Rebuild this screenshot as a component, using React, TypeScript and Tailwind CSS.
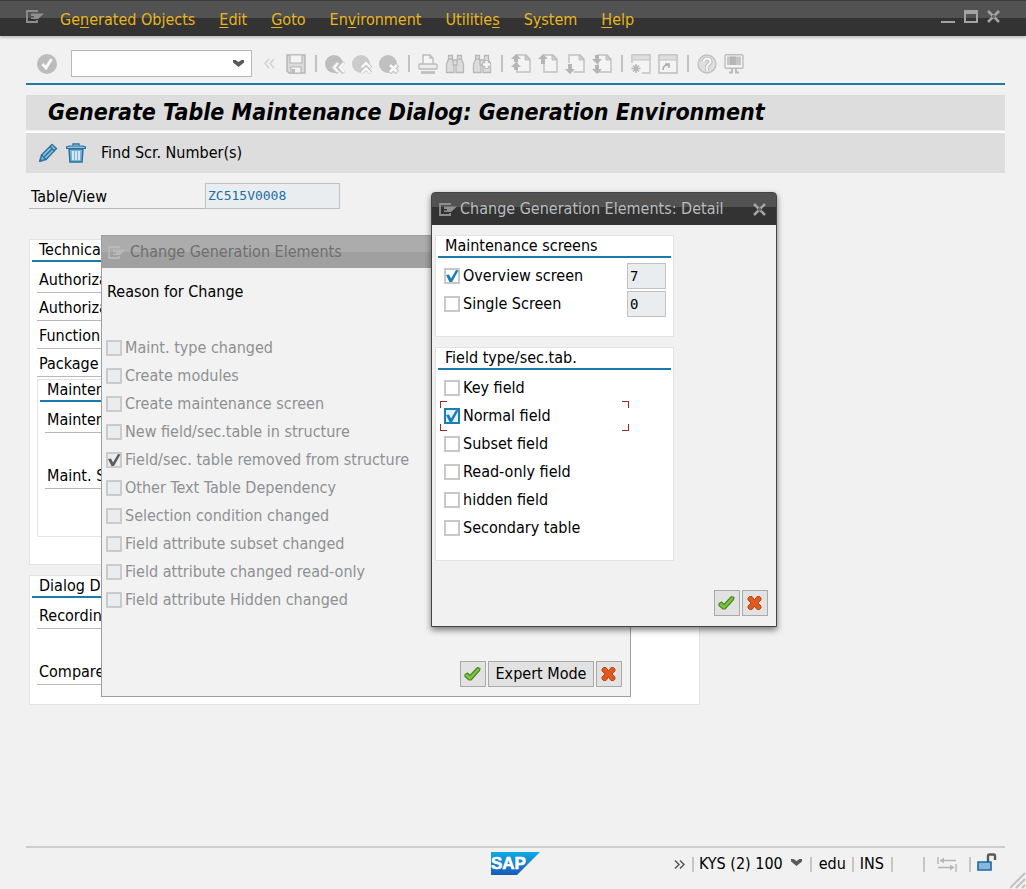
import { useState, type ReactNode } from "react";

const menus = [
  { before: "Ge", key: "n", after: "erated Objects" },
  { before: "", key: "E", after: "dit" },
  { before: "", key: "G", after: "oto" },
  { before: "En", key: "v", after: "ironment" },
  { before: "Utilitie", key: "s", after: "" },
  { before: "S", key: "y", after: "stem" },
  { before: "", key: "H", after: "elp" },
];

const reasons = [
  "Maint. type changed",
  "Create modules",
  "Create maintenance screen",
  "New field/sec.table in structure",
  "Field/sec. table removed from structure",
  "Other Text Table Dependency",
  "Selection condition changed",
  "Field attribute subset changed",
  "Field attribute changed read-only",
  "Field attribute Hidden changed",
];

const fieldTypes = [
  "Key field",
  "Normal field",
  "Subset field",
  "Read-only field",
  "hidden field",
  "Secondary table",
];

const page = "M6 1h9l4 4v13H6z";
const pageFold = "M14 1v5h5z";

const toolbarGroups: { label: string; art: ReactNode }[][] = [
  [
    {
      label: "Back",
      art: (
        <>
          <circle cx="9" cy="10" r="9" fill="#bdbdbd" />
          <path d="M13 8l-5 5.5 5 5.5M19 8l-5 5.5 5 5.5" fill="none" stroke="#c6c6c6" strokeWidth="4" />
          <path d="M13 9l-4 4.5 4 4.5M19 9l-4 4.5 4 4.5" fill="none" stroke="#f8f8f8" strokeWidth="2.4" />
        </>
      ),
    },
    {
      label: "Exit",
      art: (
        <>
          <circle cx="9" cy="10" r="9" fill="#cbcbcb" />
          <path d="M9 14l5-5 5 5M9 19l5-5 5 5" fill="none" stroke="#c4c4c4" strokeWidth="4" />
          <path d="M9.5 13.5L14 9l4.5 4.5M9.5 19l4.5-4.5 4.5 4.5" fill="none" stroke="#f8f8f8" strokeWidth="2.4" />
        </>
      ),
    },
    {
      label: "Cancel",
      art: (
        <>
          <circle cx="9" cy="10" r="9" fill="#c0c0c0" />
          <path d="M10.5 10.5l8 8M18.5 10.5l-8 8" stroke="#bdbdbd" strokeWidth="5" />
          <path d="M11 11l7 7M18 11l-7 7" stroke="#f8f8f8" strokeWidth="2.8" />
        </>
      ),
    },
  ],
  [
    {
      label: "Print",
      art: (
        <g fill="none" stroke="#bcbcbc" strokeWidth="1.4">
          <path d="M5 10V1h7l3 3v6M12 1v3h3" fill="#f6f6f6" />
          <rect x="1" y="10" width="18" height="5" rx="1" fill="#ededed" />
          <path d="M3 18.5h14" strokeWidth="2.6" />
        </g>
      ),
    },
    {
      label: "Find",
      art: (
        <g fill="#dcdcdc" stroke="#b8b8b8" strokeWidth="1.3">
          <path d="M3.5 1.5h4v4l1.5 3v10H1.5V10l2-4.5z" />
          <path d="M12.5 1.5h4v4l2 4.5v8.5H11v-10l1.5-3z" />
          <path d="M8 6h4v5H8zM4 5h3M13 5h3" />
        </g>
      ),
    },
    {
      label: "Find next",
      art: (
        <>
          <g fill="#dcdcdc" stroke="#b8b8b8" strokeWidth="1.3">
            <path d="M3.5 1.5h4v4l1.5 3v10H1.5V10l2-4.5z" />
            <path d="M12.5 1.5h4v4l2 4.5v8.5H11v-10l1.5-3z" />
            <path d="M8 6h4v5H8zM4 5h3" />
          </g>
          <path d="M14.5 6v9M10 10.5h9" stroke="#bbb" strokeWidth="4.5" />
          <path d="M14.5 7v7M11 10.5h7" stroke="#f8f8f8" strokeWidth="2.4" />
        </>
      ),
    },
  ],
  [
    {
      label: "First page",
      art: (
        <>
          <path d={page} fill="#f4f4f4" stroke="#c0c0c0" strokeWidth="1.4" />
          <path d={pageFold} fill="#ccc" stroke="#c0c0c0" />
          <path d="M5 0l5 5H7v3H3V5H0zM5 8l5 5H7v3H3v-3H0z" fill="#b5b5b5" />
        </>
      ),
    },
    {
      label: "Previous page",
      art: (
        <>
          <path d={page} fill="#f4f4f4" stroke="#c0c0c0" strokeWidth="1.4" />
          <path d={pageFold} fill="#ccc" stroke="#c0c0c0" />
          <path d="M5 0l5 5H7v5H3V5H0z" fill="#b5b5b5" />
        </>
      ),
    },
    {
      label: "Next page",
      art: (
        <>
          <path d="M4 9V1h11l4 4v13H9" fill="#f4f4f4" stroke="#c0c0c0" strokeWidth="1.4" />
          <path d={pageFold} fill="#ccc" stroke="#c0c0c0" />
          <path d="M5 20l5-5H7v-5H3v5H0z" fill="#b5b5b5" />
        </>
      ),
    },
    {
      label: "Last page",
      art: (
        <>
          <path d={page} fill="#f4f4f4" stroke="#c0c0c0" strokeWidth="1.4" />
          <path d={pageFold} fill="#ccc" stroke="#c0c0c0" />
          <path d="M5 10l5-5H7V1H3v4H0zM5 20l5-5H7v-4H3v4H0z" fill="#b5b5b5" />
        </>
      ),
    },
  ],
  [
    {
      label: "Create session",
      art: (
        <>
          <path d="M1 9V1h18v18h-8" fill="#f4f4f4" stroke="#c4c4c4" strokeWidth="1.4" />
          <path d="M1 1h18v5H1z" fill="#dedede" stroke="#c4c4c4" />
          <path d="M5 10v9M0.5 14.5h9M2 11.5l6 6M8 11.5l-6 6" stroke="#b8b8b8" strokeWidth="1.6" />
        </>
      ),
    },
    {
      label: "Create shortcut",
      art: (
        <>
          <path d="M1 1h18v18H1z" fill="#f4f4f4" stroke="#bcbcbc" strokeWidth="1.4" />
          <path d="M1 1h18v5H1z" fill="#dedede" stroke="#c4c4c4" />
          <path d="M5 16c0-3 1-5 5-5M7 10h4v4" fill="none" stroke="#adadad" strokeWidth="1.6" />
        </>
      ),
    },
  ],
  [
    {
      label: "Help",
      art: (
        <>
          <circle cx="10" cy="10" r="9" fill="#dedede" stroke="#c0c0c0" strokeWidth="1.4" />
          <path d="M6.5 8c0-4.5 7-4.5 7 0 0 2-3.5 2.5-3.5 5M10 14v2.5" fill="none" stroke="#b9b9b9" strokeWidth="4" />
          <path d="M6.5 8c0-4.5 7-4.5 7 0 0 2-3.5 2.5-3.5 5M10 14v2.5" fill="none" stroke="#f6f6f6" strokeWidth="2.2" />
        </>
      ),
    },
    {
      label: "Customize local layout",
      art: (
        <>
          <rect x="1" y="0.7" width="18" height="13.6" rx="1" fill="#f4f4f4" stroke="#bdbdbd" strokeWidth="1.4" />
          <path d="M3 2.5h14V11H3z" fill="#c6c6c6" />
          <path d="M6 2.5h6V11H6z" fill="#b6b6b6" />
          <path d="M8 14v4M12 14v4M5 18.5h4M11 18.5h4" stroke="#b9b9b9" strokeWidth="1.8" />
        </>
      ),
    },
  ],
];

function Glyph({ children }: { children: ReactNode }) {
  return (
    <svg viewBox="0 0 20 20" className="block size-5" aria-hidden="true">
      {children}
    </svg>
  );
}

function SessionIcon({ className }: { className: string }) {
  return (
    <svg viewBox="0 0 18 13" className={`block h-[13px] w-[18px] shrink-0 ${className}`} aria-hidden="true">
      <path d="M11 2V1H1v11h10v-2" fill="none" stroke="currentColor" strokeWidth="1.8" />
      <path d="M5 3.5h13L12 9H5V7.5h3V6H5z" fill="currentColor" />
    </svg>
  );
}

function CloseIcon() {
  return (
    <svg viewBox="0 0 13 13" className="block size-[13px]" aria-hidden="true">
      <path d="M1 1l11 11M12 1L1 12" stroke="#a3a3a3" strokeWidth="2.6" />
      <rect x="5" y="5" width="3" height="3" fill="#6a6a6a" />
    </svg>
  );
}

function Separator() {
  return (
    <span className="flex w-[5px] justify-center">
      <span className="h-[17px] w-0.5 bg-[#c2c2c2]" />
    </span>
  );
}

function StatusDivider() {
  return <span className="h-[15px] w-0.5 bg-[#c6c6c6]" />;
}

function Chevron({ className }: { className?: string }) {
  return (
    <svg viewBox="0 0 11 7" className={`h-[7px] w-[11px] ${className ?? ""}`} aria-hidden="true">
      <path d="M0 0h2.5l3 2 3-2H11v2.5L5.5 7 0 2.5z" fill="#5a5a5a" />
    </svg>
  );
}

function Check({
  label,
  defaultChecked = false,
  disabled = false,
  focused = false,
}: {
  label: string;
  defaultChecked?: boolean;
  disabled?: boolean;
  focused?: boolean;
}) {
  const [checked, setChecked] = useState(defaultChecked);
  const box = disabled
    ? "border-[#c9cbcc] bg-[#e9edef]"
    : focused
      ? "border-[#1b7fb5] bg-[#e5f1f8]"
      : "border-[#c8c8c8] bg-white";

  return (
    <label className={`flex h-7 items-center gap-[3px] ${disabled ? "text-[#8e9093]" : "text-black"}`}>
      <span className="relative flex size-4 shrink-0">
        <input
          type="checkbox"
          checked={checked}
          disabled={disabled}
          onChange={(e) => setChecked(e.target.checked)}
          className={`size-4 appearance-none border-2 ${box}`}
        />
        {checked && (
          <svg viewBox="0 0 16 16" className="pointer-events-none absolute inset-0 size-4" aria-hidden="true">
            <path
              d="M2 7l3-.5 2 4L12 2l2.5.5L8 14H5.5z"
              fill={disabled ? "#5c5c5c" : "#1b7fb5"}
            />
          </svg>
        )}
      </span>
      <span className="whitespace-nowrap">{label}</span>
    </label>
  );
}

function Group({ title, className, children }: { title: string; className?: string; children: ReactNode }) {
  return (
    <section className={`border border-[#e3e3e3] bg-white px-0.5 ${className ?? ""}`}>
      <h2 className="flex h-[22px] items-center border-b-2 border-[#1a7aae] pl-[7px]">{title}</h2>
      <div className="px-[5px] pt-1">{children}</div>
    </section>
  );
}

function Row({ children }: { children: ReactNode }) {
  return (
    <div className="h-7 w-1/2">
      <div className="flex h-[27px] items-center border-b border-[#b9b9b9] pt-0.5 pl-0.5">{children}</div>
    </div>
  );
}

function AcceptIcon() {
  return (
    <svg viewBox="0 0 18 16" className="h-4 w-[18px]" aria-hidden="true">
      <path
        d="M1 8.5L3.5 7 6 9.5l7.500-8 2.500 1-.5 2L7 14H5l-4-3.500z"
        fill="#7fc241"
        stroke="#4b8a22"
        strokeWidth="1.2"
        strokeLinejoin="round"
      />
    </svg>
  );
}

function CancelIcon() {
  return (
    <svg viewBox="0 0 16 16" className="size-4" aria-hidden="true">
      <path
        d="M1 3l1.5-1.5H5L7.5 5 10 1.5h2.5L14 3v2l-3 3 3 3v2l-1.5 1.5H10L7.5 11 5 14.5H2.5L1 13v-2l3-3-3-3z"
        fill="#e2581d"
        stroke="#b04a1a"
        strokeWidth="1"
      />
    </svg>
  );
}

function DialogButton({ label, children }: { label?: string; children: ReactNode }) {
  return (
    <button
      type="button"
      aria-label={label}
      className="flex h-[26px] min-w-[26px] items-center justify-center border border-[#a9a9a9] bg-[#e2e2e2]"
    >
      {children}
    </button>
  );
}

function MenuBar() {
  return (
    <header className="flex h-9 items-center border-t border-[#3c3c3c] bg-linear-to-b from-[#525252] from-48% to-[#333] to-48% px-[26px] shadow-[0_2px_2px_#c4c4c4]">
      <SessionIcon className="mb-1 text-[#8f8f8f]" />
      <nav className="ml-4 flex gap-6 pt-0.5 text-[#e8b520]">
        {menus.map((m) => (
          <button key={m.before + m.key} type="button" className="whitespace-nowrap">
            {m.before}
            <span className="underline underline-offset-2">{m.key}</span>
            {m.after}
          </button>
        ))}
      </nav>
      <div className="mb-1 ml-auto flex items-end gap-[9px]">
        <button type="button" aria-label="Minimize" className="flex h-[13px] items-end">
          <span className="h-0.5 w-3.5 bg-[#a3a3a3]" />
        </button>
        <button type="button" aria-label="Maximize" className="h-[13px] w-3.5 border-2 border-t-4 border-[#a3a3a3]" />
        <button type="button" aria-label="Close">
          <CloseIcon />
        </button>
      </div>
    </header>
  );
}

function StandardToolbar() {
  return (
    <div className="flex h-12 items-center gap-[7px] border-b-2 border-[#1e7b9f] pt-[7px] pl-[11px]">
      <button type="button" aria-label="Enter">
        <Glyph>
          <circle cx="10" cy="10" r="10" fill="#bcbcbc" />
          <path d="M5.5 10L9 14l5.5-9" fill="none" stroke="#fafafa" strokeWidth="2.8" />
        </Glyph>
      </button>
      <div className="relative ml-[7px]">
        <select
          aria-label="Command"
          className="block h-[27px] w-[181px] appearance-none border border-[#b9b9b9] bg-white px-1"
        />
        <Chevron className="pointer-events-none absolute top-2.5 right-2" />
      </div>
      <button type="button" aria-label="Hide command field" className="mx-[3px] flex w-3.5 justify-center">
        <svg viewBox="0 0 11 11" className="size-[11px]" aria-hidden="true">
          <path d="M5 1L1 5.5 5 10M10 1L6 5.5l4 4.5" fill="none" stroke="#d2d2d2" strokeWidth="1.6" />
        </svg>
      </button>
      <button type="button" aria-label="Save">
        <Glyph>
          <path d="M1 1h18v18H3l-2-2z" fill="#dadada" stroke="#b6b6b6" strokeWidth="1.4" />
          <path d="M4 1h12v8H4zM5 13h10v6H5z" fill="#f4f4f4" stroke="#b8b8b8" strokeWidth="1.2" />
          <path d="M6 15h3v4H6z" fill="#bbb" />
        </Glyph>
      </button>
      {toolbarGroups.map((group) => (
        <div key={group[0].label} className="flex items-center gap-[7px]">
          <Separator />
          {group.map((item) => (
            <button key={item.label} type="button" aria-label={item.label}>
              <Glyph>{item.art}</Glyph>
            </button>
          ))}
        </div>
      ))}
    </div>
  );
}

function ReasonDialog() {
  return (
    <div
      role="dialog"
      aria-labelledby="reason-title"
      className="absolute top-[235px] left-[101px] flex h-[462px] w-[530px] flex-col border border-[#9f9f9f] bg-[#f2f2f2]"
    >
      <div className="flex h-8 shrink-0 items-center gap-1 bg-linear-to-b from-[#acacac] from-50% to-[#a0a0a0] to-50% pl-1.5 text-[#6f6f6f]">
        <SessionIcon className="text-[#b8b8b8]" />
        <h2 id="reason-title">Change Generation Elements</h2>
      </div>
      <p className="mt-3.5 pl-[5px]">Reason for Change</p>
      <div className="mt-8 pl-1">
        {reasons.map((r) => (
          <Check key={r} label={r} disabled defaultChecked={r === "Field/sec. table removed from structure"} />
        ))}
      </div>
      <div className="mt-auto mr-2 mb-[9px] flex justify-end gap-0.5">
        <DialogButton label="Continue">
          <AcceptIcon />
        </DialogButton>
        <DialogButton>
          <span className="w-[104px] whitespace-nowrap">Expert Mode</span>
        </DialogButton>
        <DialogButton label="Cancel">
          <CancelIcon />
        </DialogButton>
      </div>
    </div>
  );
}

function CountField({ label, value }: { label: string; value: string }) {
  return (
    <input
      aria-label={label}
      readOnly
      value={value}
      className="h-[26px] w-[39px] border border-[#bfc1c2] bg-[#e9edf0] px-0.5 font-['DejaVu_Sans_Mono',monospace] text-sm"
    />
  );
}

function DetailDialog() {
  return (
    <div
      role="dialog"
      aria-labelledby="detail-title"
      className="absolute top-[192px] left-[431px] flex h-[435px] w-[346px] flex-col rounded-t-sm border border-[#3d4346] bg-[#f1f1f1] shadow-[0_3px_6px_rgba(0,0,0,0.5)]"
    >
      <div className="flex h-8 shrink-0 items-center bg-linear-to-b from-[#525252] from-45% to-[#333] to-45% pr-2.5 pl-[7px] text-[#b9bcbe]">
        <SessionIcon className="text-[#8f8f8f]" />
        <h2 id="detail-title" className="pl-[3px] whitespace-nowrap">
          Change Generation Elements: Detail
        </h2>
        <button type="button" aria-label="Close" className="ml-auto">
          <CloseIcon />
        </button>
      </div>
      <div className="flex w-[242px] flex-col gap-2.5 pt-2.5 pl-[3px]">
        <Group title="Maintenance screens" className="pb-[18px]">
          <div className="flex items-center justify-between pl-px">
            <Check label="Overview screen" defaultChecked />
            <CountField label="Overview screen number" value="7" />
          </div>
          <div className="flex items-center justify-between pl-px">
            <Check label="Single Screen" />
            <CountField label="Single screen number" value="0" />
          </div>
        </Group>
        <Group title="Field type/sec.tab." className="pb-[18px]">
          {fieldTypes.map((f) => {
            const focused = f === "Normal field";
            return (
              <div key={f} className="relative ml-px w-[181px]">
                <Check label={f} defaultChecked={focused} focused={focused} />
                {focused && (
                  <div className="pointer-events-none absolute -inset-x-1 -inset-y-px" aria-hidden="true">
                    <span className="absolute top-0 left-0 size-[7px] border-t border-l border-[#9c2a2a]" />
                    <span className="absolute top-0 right-0 size-[7px] border-t border-r border-[#9c2a2a]" />
                    <span className="absolute bottom-0 left-0 size-[7px] border-b border-l border-[#9c2a2a]" />
                    <span className="absolute right-0 bottom-0 size-[7px] border-r border-b border-[#9c2a2a]" />
                  </div>
                )}
              </div>
            );
          })}
        </Group>
      </div>
      <div className="mt-auto mr-2 mb-2.5 flex justify-end gap-0.5">
        <DialogButton label="Continue">
          <AcceptIcon />
        </DialogButton>
        <DialogButton label="Cancel">
          <CancelIcon />
        </DialogButton>
      </div>
    </div>
  );
}

function SapLogo() {
  return (
    <svg viewBox="0 0 49 23" className="h-[23px] w-[49px]" role="img" aria-label="SAP">
      <defs>
        <linearGradient id="sap" x1="0" y1="0" x2="0" y2="1">
          <stop offset="0" stopColor="#10a9e6" />
          <stop offset="1" stopColor="#1c5bb4" />
        </linearGradient>
      </defs>
      <path d="M0 0h49L26 23H0z" fill="url(#sap)" />
      <text x="0" y="17" fill="#fff" stroke="#fff" strokeWidth="0.6" fontSize="17" fontWeight="700" fontFamily="Liberation Sans, sans-serif">
        SAP
      </text>
    </svg>
  );
}

function StatusLine() {
  return (
    <footer className="mt-auto mr-[21px] ml-[26px] grid h-[43px] grid-cols-[1fr_auto_1fr] items-start border-t-2 border-[#cdcdcd] pt-1">
      <div className="col-start-2">
        <SapLogo />
      </div>
      <div className="mr-2 flex h-6 items-center justify-end whitespace-nowrap">
        <button type="button" aria-label="Show more" className="mr-[7px]">
          <svg viewBox="0 0 11 9" className="h-[9px] w-[11px]" aria-hidden="true">
            <path d="M1 0.5l4 4-4 4M6 0.5l4 4-4 4" fill="none" stroke="#555" strokeWidth="1.5" />
          </svg>
        </button>
        <StatusDivider />
        <button type="button" className="ml-[5px] flex items-center gap-2">
          KYS (2) 100
          <Chevron className="mb-1" />
        </button>
        <span className="mr-[7px] ml-2 flex">
          <StatusDivider />
        </span>
        edu
        <span className="mx-1.5 flex">
          <StatusDivider />
        </span>
        INS
        <span className="mr-[30px] ml-[7px] flex">
          <StatusDivider />
        </span>
        <StatusDivider />
        <svg viewBox="0 0 20 16" className="mx-3 h-4 w-5" aria-hidden="true">
          <path d="M1 1v7M3 4.5h16M1 11.5h16M19 8v8" fill="none" stroke="#b5b5b5" strokeWidth="1.4" />
          <path d="M3 4.5l4-3v6zM17 11.5l-4-3v6z" fill="#b5b5b5" />
        </svg>
        <StatusDivider />
        <svg viewBox="0 0 20 18" className="mb-1 ml-1.5 h-[18px] w-5" aria-hidden="true">
          <path d="M11 9V3q0-1.5 1.5-1.5h4Q18 1.5 18 3v4" fill="none" stroke="#5a5a5a" strokeWidth="2.4" />
          <path d="M1 9h13v8H1z" fill="#84b8e0" stroke="#1d6a9e" strokeWidth="1.6" />
        </svg>
      </div>
    </footer>
  );
}

export default function App() {
  return (
    <div className="relative flex min-h-screen flex-col bg-[#f1f1f1] font-['DejaVu_Sans_Condensed','DejaVu_Sans',sans-serif] text-base leading-5 text-black">
      <MenuBar />
      <main className="mr-[21px] ml-[26px] flex flex-col pt-px">
        <StandardToolbar />
        <h1 className="mt-2.5 flex h-9 items-center border-b border-[#eee] bg-[#dddddd] pb-0.5 pl-[22px] text-[23px] leading-7 font-bold whitespace-nowrap italic">
          Generate Table Maintenance Dialog: Generation Environment
        </h1>
        <div className="flex h-[42px] items-center border-t-2 border-white bg-[#dddddd] pl-3">
          <button type="button" aria-label="Display / Change">
            <svg viewBox="0 0 20 20" className="size-5" aria-hidden="true">
              <path d="M2 18l1.5-6L14 1.5l4.5 4L8 16.5z" fill="#8cc0e4" stroke="#2a7099" strokeWidth="1.4" strokeLinejoin="round" />
              <path d="M12 3.5L16.5 8M3.5 12L8 16.5M6.5 13.5l8-8" stroke="#2a7099" strokeWidth="1.6" />
              <path d="M1 19l1-4 3 3z" fill="#2a7099" />
            </svg>
          </button>
          <button type="button" aria-label="Delete" className="ml-2">
            <svg viewBox="0 0 20 20" className="size-5" aria-hidden="true">
              <path d="M3 6l1 13h12l1-13z" fill="#7ab4da" stroke="#2a7099" strokeWidth="1.5" />
              <path d="M0.5 5.5V4L3 3h14l2.5 1v1.5z" fill="#8cc0e4" stroke="#2a7099" strokeWidth="1.2" />
              <path d="M7 2.5V1h6v1.5" fill="none" stroke="#2a7099" strokeWidth="1.4" />
              <path d="M7 8v9M10 8v9M13 8v9" stroke="#eaf5fb" strokeWidth="1.6" />
            </svg>
          </button>
          <button type="button" className="ml-[15px]">Find Scr. Number(s)</button>
        </div>

        <div className="mt-2.5 ml-[3px] flex h-[26px] items-stretch">
          <label htmlFor="table-view" className="flex w-44 items-center border-b border-[#b9b9b9] pt-0.5 pl-0.5">
            Table/View
          </label>
          <input
            id="table-view"
            readOnly
            value="ZC515V0008"
            className="w-[135px] border border-[#bfc1c2] bg-[#e9edf0] px-0.5 font-['DejaVu_Sans_Mono',monospace] text-[13px] text-[#1c6fa8]"
          />
        </div>

        <div className="mt-[30px] ml-[3px] flex w-[671px] flex-col gap-2.5">
          <Group title="Technica" className="pb-[27px]">
            <Row>Authoriza</Row>
            <Row>Authoriza</Row>
            <Row>Function</Row>
            <Row>Package</Row>
            <Group title="Mainten" className="mt-px pb-[18px]">
              <Row>Mainten</Row>
              <div className="h-7" />
              <Row>Maint. S</Row>
              <div className="h-7" />
            </Group>
          </Group>
          <Group title="Dialog Da" className="pb-[18px]">
            <Row>Recordin</Row>
            <div className="h-7" />
            <Row>Compare</Row>
          </Group>
        </div>
      </main>
      <ReasonDialog />
      <DetailDialog />
      <StatusLine />
      <svg viewBox="0 0 16 18" className="absolute right-0 bottom-0 h-[18px] w-4" aria-hidden="true">
        <path d="M0 17L15 2M6 17l9-9M12 17l3-3" stroke="#c2c2c2" strokeWidth="2" />
      </svg>
    </div>
  );
}
